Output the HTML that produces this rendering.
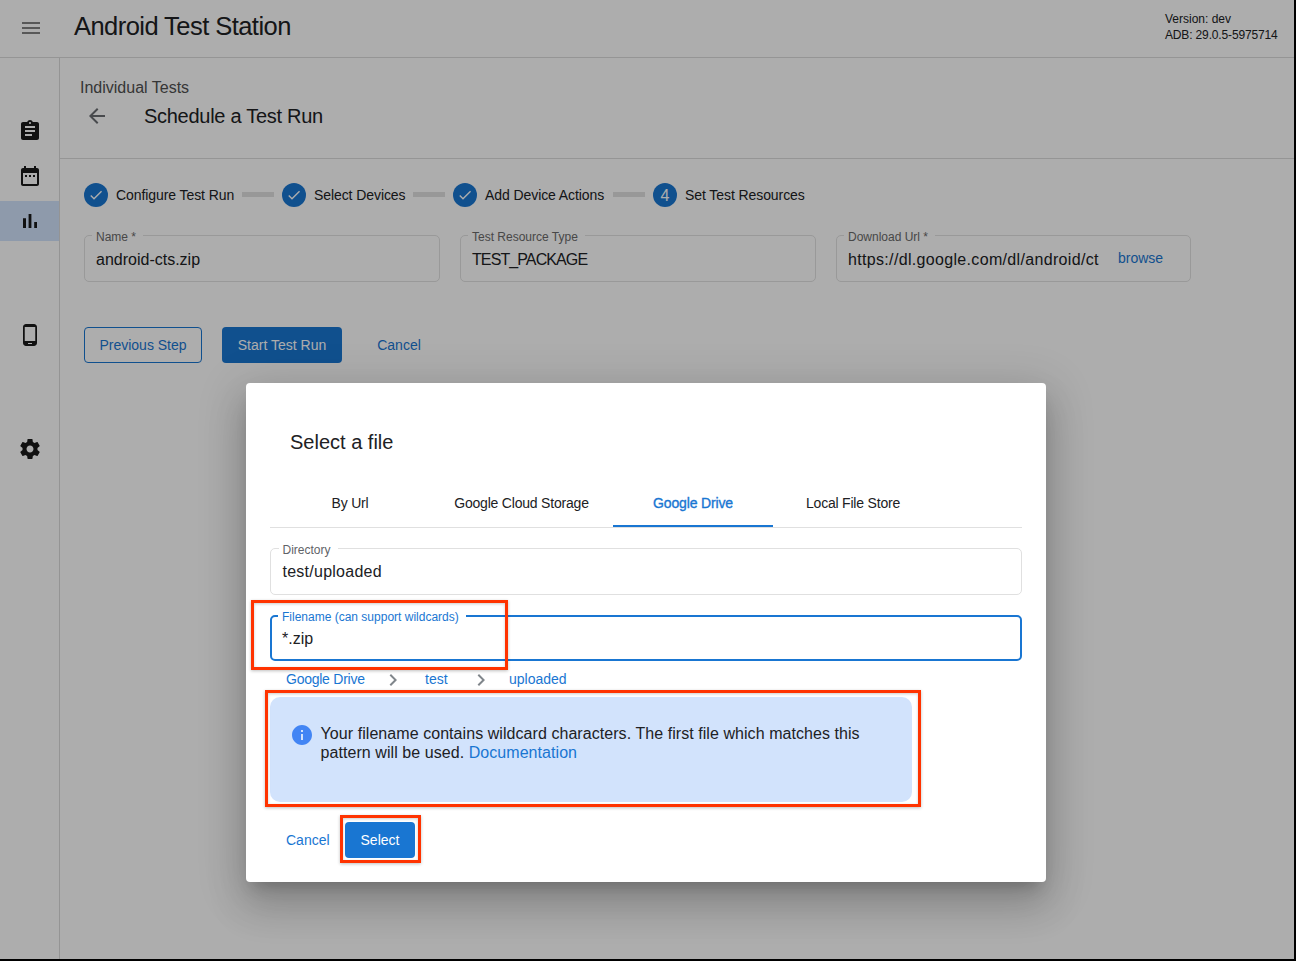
<!DOCTYPE html>
<html><head><meta charset="utf-8">
<style>
*{box-sizing:border-box;margin:0;padding:0}
html,body{width:1296px;height:961px;overflow:hidden;background:#000;font-family:"Liberation Sans",sans-serif}
#page{position:absolute;left:0;top:0;width:1294px;height:959px;background:#fff;overflow:hidden}
.t{position:absolute;white-space:nowrap;line-height:1}
.hdr{position:absolute;left:0;top:0;width:1294px;height:58px;border-bottom:1px solid #dcdcdc}
.side{position:absolute;left:0;top:58px;width:60px;height:901px;border-right:1px solid #dadada}
.sel{position:absolute;left:0;top:201px;width:59px;height:40px;background:#d2e3fc}
.ico{position:absolute;width:24px;height:24px}
.sub{position:absolute;left:60px;top:158px;width:1234px;height:1px;background:#dcdcdc}
.circ{position:absolute;top:183px;width:24px;height:24px;border-radius:50%;background:#1976d2}
.conn{position:absolute;top:192px;width:32px;height:5px;background:#e0e0e0}
.fld{position:absolute;top:235px;height:47px;border:1px solid #e2e2e2;border-radius:5px}
.lbl{position:absolute;font-size:12px;color:#6a6a6a;background:#fff;padding:0 7px 0 4px;line-height:1}
.val{position:absolute;font-size:16px;color:#202124;line-height:1}
.btn{position:absolute;top:327px;height:36px;border-radius:4px;font-size:14px;line-height:36px;text-align:center;color:#1976d2}
#ovl{position:absolute;left:0;top:0;width:1294px;height:959px;background:rgba(0,0,0,.32)}
#dlg{position:absolute;left:246px;top:383px;width:800px;height:499px;background:#fff;border-radius:4px;box-shadow:0 11px 15px -7px rgba(0,0,0,.2),0 24px 38px 3px rgba(0,0,0,.14),0 9px 46px 8px rgba(0,0,0,.12)}
.tab{position:absolute;top:496.1px;font-size:14px;letter-spacing:-0.2px;line-height:1;text-align:center;color:#202124;white-space:nowrap}
.fld2{position:absolute;left:270px;width:752px;border-radius:5px}
.red{position:absolute;border:3px solid #ff3300;box-shadow:0 1px 3px rgba(0,0,0,.25),inset 0 1px 3px rgba(0,0,0,.2)}
</style></head>
<body>
<div id="page">
  <div class="hdr"></div>
  <!-- hamburger -->
  <div style="position:absolute;left:22px;top:22px;width:18px;height:2px;background:#828282"></div>
  <div style="position:absolute;left:22px;top:27px;width:18px;height:2px;background:#828282"></div>
  <div style="position:absolute;left:22px;top:32px;width:18px;height:2px;background:#828282"></div>
  <div class="t" style="left:74px;top:14.3px;font-size:25.5px;letter-spacing:-0.55px;color:#202124">Android Test Station</div>
  <div class="t" style="left:1165px;top:12.6px;font-size:12px;color:#202124">Version: dev</div>
  <div class="t" style="left:1165px;top:28.7px;font-size:12px;letter-spacing:-0.15px;color:#202124">ADB: 29.0.5-5975714</div>

  <div class="side"></div>
  <div class="sel"></div>
  <svg class="ico" style="left:18px;top:119px" viewBox="0 0 24 24"><path fill="#1a1a1a" d="M19 3h-4.18C14.4 1.84 13.3 1 12 1c-1.3 0-2.4.84-2.82 2H5c-1.1 0-2 .9-2 2v14c0 1.1.9 2 2 2h14c1.1 0 2-.9 2-2V5c0-1.1-.9-2-2-2zm-7 0c.55 0 1 .45 1 1s-.45 1-1 1-1-.45-1-1 .45-1 1-1zm2 14H7v-2h7v2zm3-4H7v-2h10v2zm0-4H7V7h10v2z"/></svg>
  <svg class="ico" style="left:18px;top:164px" viewBox="0 0 24 24"><path fill="#1a1a1a" d="M9 11H7v2h2v-2zm4 0h-2v2h2v-2zm4 0h-2v2h2v-2zm2-7h-1V2h-2v2H8V2H6v2H5c-1.11 0-1.99.9-1.99 2L3 20c0 1.1.89 2 2 2h14c1.1 0 2-.9 2-2V6c0-1.1-.9-2-2-2zm0 16H5V9h14v11z"/></svg>
  <svg class="ico" style="left:18px;top:209px" viewBox="0 0 24 24"><path fill="#1a1a1a" d="M5 9.2h3V19H5zM10.6 5h2.8v14h-2.8zm5.6 8H19v6h-2.8z"/></svg>
  <svg class="ico" style="left:18px;top:323px" viewBox="0 0 24 24"><path fill="#1a1a1a" d="M16 1H8C6.34 1 5 2.34 5 4v16c0 1.66 1.34 3 3 3h8c1.66 0 3-1.34 3-3V4c0-1.66-1.34-3-3-3zm-2 20h-4v-1h4v1zm3.25-3H6.75V4h10.5v14z"/></svg>
  <svg class="ico" style="left:18px;top:437px" viewBox="0 0 24 24"><path fill="#1a1a1a" d="M19.43 12.98c.04-.32.07-.64.07-.98s-.03-.66-.07-.98l2.11-1.65c.19-.15.24-.42.12-.64l-2-3.460c-.12-.22-.39-.3-.61-.22l-2.49 1c-.52-.4-1.08-.73-1.690-.98l-.38-2.65C14.46 2.18 14.25 2 14 2h-4c-.25 0-.46.18-.49.42l-.38 2.65c-.61.25-1.17.59-1.69.98l-2.49-1c-.23-.09-.49 0-.61.22l-2 3.46c-.13.22-.07.49.12.64l2.11 1.65c-.04.32-.07.65-.07.98s.03.66.07.98l-2.11 1.65c-.19.15-.24.42-.12.64l2 3.46c.12.22.39.3.61.22l2.49-1c.52.4 1.08.73 1.69.98l.38 2.65c.03.24.24.42.49.42h4c.25 0 .46-.18.49-.42l.38-2.65c.61-.25 1.17-.59 1.69-.98l2.49 1c.23.09.49 0 .61-.22l2-3.46c.12-.22.07-.49-.12-.64l-2.11-1.65zM12 15.5c-1.93 0-3.5-1.57-3.5-3.5s1.57-3.5 3.5-3.5 3.5 1.57 3.5 3.5-1.57 3.5-3.5 3.5z"/></svg>

  <div class="t" style="left:80px;top:79.5px;font-size:16px;color:#505050">Individual Tests</div>
  <div class="t" style="left:144px;top:106px;font-size:20px;letter-spacing:-0.28px;color:#202124">Schedule a Test Run</div>
  <svg class="ico" style="left:85px;top:104px" viewBox="0 0 24 24"><path fill="#6b6e72" d="M20 11H7.83l5.59-5.59L12 4l-8 8 8 8 1.41-1.41L7.83 13H20v-2z"/></svg>
  <div class="sub"></div>

  <!-- stepper -->
  <div class="circ" style="left:84px"></div><svg style="position:absolute;left:88px;top:187.2px;width:16px;height:16px" viewBox="0 0 24 24"><path fill="#fff" d="M9 16.17L4.83 12l-1.42 1.41L9 19 21 7l-1.41-1.41z"/></svg>
  <div class="t" style="left:116px;top:188.3px;font-size:14px;letter-spacing:-0.08px;color:#202124">Configure Test Run</div>
  <div class="conn" style="left:242px"></div>
  <div class="circ" style="left:282px"></div><svg style="position:absolute;left:286px;top:187.2px;width:16px;height:16px" viewBox="0 0 24 24"><path fill="#fff" d="M9 16.17L4.83 12l-1.42 1.41L9 19 21 7l-1.41-1.41z"/></svg>
  <div class="t" style="left:314px;top:188.3px;font-size:14px;letter-spacing:-0.08px;color:#202124">Select Devices</div>
  <div class="conn" style="left:413px"></div>
  <div class="circ" style="left:453px"></div><svg style="position:absolute;left:457px;top:187.2px;width:16px;height:16px" viewBox="0 0 24 24"><path fill="#fff" d="M9 16.17L4.83 12l-1.42 1.41L9 19 21 7l-1.41-1.41z"/></svg>
  <div class="t" style="left:485px;top:188.3px;font-size:14px;letter-spacing:-0.08px;color:#202124">Add Device Actions</div>
  <div class="conn" style="left:613px"></div>
  <div class="circ" style="left:653px;color:#fff;font-size:16px;line-height:26px;text-align:center">4</div>
  <div class="t" style="left:685px;top:188.3px;font-size:14px;letter-spacing:-0.08px;color:#202124">Set Test Resources</div>

  <!-- fields -->
  <div class="fld" style="left:84px;width:356px"></div>
  <div class="lbl" style="left:92px;top:230.5px">Name *</div>
  <div class="val" style="left:96px;top:251.5px">android-cts.zip</div>
  <div class="fld" style="left:460px;width:356px"></div>
  <div class="lbl" style="left:468px;top:230.5px">Test Resource Type</div>
  <div class="val" style="left:472px;top:251.5px;letter-spacing:-0.9px">TEST_PACKAGE</div>
  <div class="fld" style="left:836px;width:355px"></div>
  <div class="lbl" style="left:844px;top:230.5px">Download Url *</div>
  <div class="val" style="left:848px;top:251.5px;width:251px;height:20px;overflow:hidden;letter-spacing:0.33px">https://dl.google.com/dl/android/cts</div>
  <div class="t" style="left:1118px;top:251px;font-size:14px;color:#1976d2">browse</div>

  <!-- buttons -->
  <div class="btn" style="left:84px;width:118px;border:1px solid #1976d2;line-height:34px">Previous Step</div>
  <div class="btn" style="left:222px;width:120px;background:#1976d2;color:#fff">Start Test Run</div>
  <div class="btn" style="left:362px;width:74px">Cancel</div>

  <div id="ovl"></div>

  <div id="dlg"></div>
  <div class="t" style="left:290px;top:431.7px;font-size:20px;color:#202124">Select a file</div>
  <!-- tabs -->
  <div class="tab" style="left:270px;width:160px">By Url</div>
  <div class="tab" style="left:430px;width:183px">Google Cloud Storage</div>
  <div class="tab" style="left:613px;width:160px;color:#1976d2;-webkit-text-stroke:0.35px #1976d2;letter-spacing:-0.15px">Google Drive</div>
  <div class="tab" style="left:773px;width:160px">Local File Store</div>
  <div style="position:absolute;left:270px;top:527px;width:752px;height:1px;background:#e0e0e0"></div>
  <div style="position:absolute;left:613px;top:525px;width:160px;height:2px;background:#1976d2"></div>
  <!-- directory -->
  <div class="fld2" style="top:548px;height:47px;border:1px solid #e0e0e0"></div>
  <div class="lbl" style="left:278.5px;top:543.8px;color:#5f6368">Directory</div>
  <div class="val" style="left:282.5px;top:564.2px;letter-spacing:0.25px">test/uploaded</div>
  <!-- filename -->
  <div class="fld2" style="top:615px;height:46px;border:2px solid #1976d2"></div>
  <div class="lbl" style="left:278px;top:611.2px;color:#1976d2">Filename (can support wildcards)</div>
  <div class="val" style="left:282px;top:631.1px">*.zip</div>
  <!-- breadcrumbs -->
  <div class="t" style="left:286px;top:671.8px;font-size:14px;letter-spacing:-0.25px;color:#1976d2">Google Drive</div>
  <svg class="ico" style="left:381px;top:668px" viewBox="0 0 24 24"><path fill="#80868b" d="M10 6L8.59 7.41 13.17 12l-4.58 4.59L10 18l6-6z"/></svg>
  <div class="t" style="left:425px;top:671.8px;font-size:14px;color:#1976d2">test</div>
  <svg class="ico" style="left:469px;top:668px" viewBox="0 0 24 24"><path fill="#80868b" d="M10 6L8.59 7.41 13.17 12l-4.58 4.59L10 18l6-6z"/></svg>
  <div class="t" style="left:509px;top:671.8px;font-size:14px;color:#1976d2">uploaded</div>
  <!-- info box -->
  <div style="position:absolute;left:270px;top:697px;width:642px;height:105px;background:#d2e3fc;border-radius:10px"></div>
  <svg class="ico" style="left:290px;top:723px" viewBox="0 0 24 24"><path fill="#4285f4" d="M12 2C6.48 2 2 6.48 2 12s4.48 10 10 10 10-4.48 10-10S17.52 2 12 2zm1 15h-2v-6h2v6zm0-8h-2V7h2v2z"/></svg>
  <div class="t" style="left:320.6px;top:723.5px;font-size:16px;letter-spacing:0.06px;line-height:19.2px;color:#202124;white-space:normal;width:580px">Your filename contains wildcard characters. The first file which matches this pattern will be used. <span style="color:#1976d2">Documentation</span></div>
  <!-- actions -->
  <div class="t" style="left:286px;top:832.7px;font-size:14px;color:#1976d2">Cancel</div>
  <div style="position:absolute;left:345px;top:822px;width:70px;height:36px;border-radius:4px;background:#1976d2;color:#fff;font-size:14px;line-height:36px;text-align:center">Select</div>
  <!-- red annotations -->
  <div class="red" style="left:251px;top:600px;width:257px;height:70px"></div>
  <div class="red" style="left:265px;top:690px;width:656px;height:117px"></div>
  <div class="red" style="left:340px;top:815px;width:81px;height:48px"></div>
</div>
</body></html>
